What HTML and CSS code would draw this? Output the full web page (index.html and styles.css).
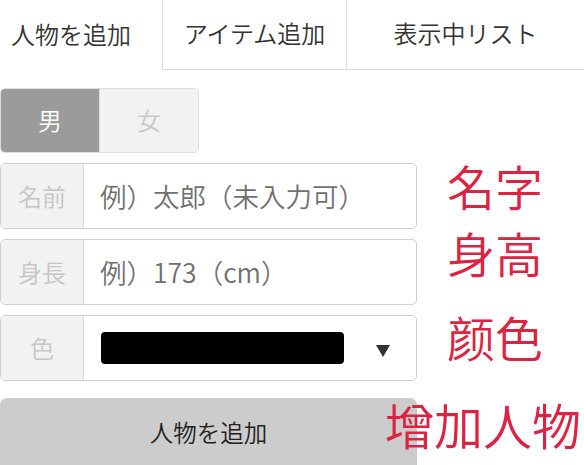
FILE: index.html
```html
<!DOCTYPE html>
<html lang="ja">
<head>
<meta charset="utf-8">
<link rel="stylesheet" href="styles.css">
</head>
<body>
<div class="page">
  <nav class="tabs">
    <div class="tab active">人物を追加</div>
    <div class="tab">アイテム追加</div>
    <div class="tab">表示中リスト</div>
  </nav>

  <div class="form">
    <div class="gender">
      <div class="g-btn on">男</div>
      <div class="g-btn off">女</div>
    </div>

    <div class="row">
      <div class="group">
        <div class="addon">名前</div>
        <div class="field">例）太郎（未入力可）</div>
      </div>
      <div class="note n1">名字</div>
    </div>

    <div class="row">
      <div class="group">
        <div class="addon">身長</div>
        <div class="field">例）173（cm）</div>
      </div>
      <div class="note n2">身高</div>
    </div>

    <div class="row">
      <div class="group">
        <div class="addon">色</div>
        <div class="field select">
          <span class="swatch"></span>
          <span class="caret"></span>
        </div>
      </div>
      <div class="note n3">颜色</div>
    </div>

    <div class="row last">
      <div class="submit">人物を追加</div>
      <div class="note overlap">增加人物</div>
    </div>
  </div>
</div>
</body>
</html>
```

FILE: styles.css
```css
html, body {
  margin: 0;
  padding: 0;
  background: #fff;
}
body {
  font-family: "Noto Sans CJK JP", "Noto Sans", sans-serif;
  font-weight: 350;
  color: #333;
  overflow: hidden;
}
.page {
  width: 584px;
  height: 465px;
  overflow: hidden;
}
.tabs {
  display: grid;
  grid-template-columns: 162px 184px 1fr;
  height: 70px;
}
.tab {
  display: flex;
  align-items: center;
  justify-content: center;
  font-size: 24px;
  color: #333;
  border-left: 1px solid #ddd;
  border-bottom: 1px solid #ddd;
  padding-bottom: 4px;
  box-sizing: border-box;
}
.tab.active {
  border: none;
  justify-content: flex-start;
  padding-left: 11px;
}
.form {
  display: flex;
  flex-direction: column;
  padding-top: 18px;
}
.gender {
  display: flex;
  width: 199px;
  height: 65px;
  border-radius: 5px;
  overflow: hidden;
  border: 1px solid #ddd;
  box-sizing: border-box;
  margin-bottom: 10px;
}
.g-btn {
  flex: 1;
  display: flex;
  align-items: center;
  justify-content: center;
  font-size: 24px;
  padding-bottom: 2px;
}
.g-btn.on {
  background: #9b9b9b;
  color: #fff;
}
.g-btn.off {
  background: #f2f2f2;
  color: #c8c8c8;
  border-left: 1px solid #ddd;
}
.row {
  display: grid;
  grid-template-columns: 417px 1fr;
  align-items: start;
  margin-bottom: 10px;
}
.group {
  display: flex;
  height: 66px;
  border: 1px solid #cfcfcf;
  border-radius: 5px;
  box-sizing: border-box;
  overflow: hidden;
}
.addon {
  width: 82px;
  flex: none;
  background: #f2f2f2;
  border-right: 1px solid #d6d6d6;
  color: #c6c6c6;
  font-size: 24px;
  display: flex;
  align-items: center;
  justify-content: center;
  padding-bottom: 2px;
}
.field {
  flex: 1;
  display: flex;
  align-items: center;
  padding-left: 16px;
  font-size: 26.5px;
  color: #707070;
  padding-bottom: 2px;
}
.field.select {
  padding-left: 17px;
  padding-right: 26px;
  justify-content: space-between;
  padding-bottom: 0;
}
.swatch {
  width: 243px;
  height: 32px;
  background: #000;
  border-radius: 4px;
}
.caret {
  width: 0;
  height: 0;
  border-left: 7px solid transparent;
  border-right: 7px solid transparent;
  border-top: 12px solid #333;
  margin-top: 6px;
}
.note {
  font-family: "Noto Sans CJK SC", sans-serif;
  font-weight: 350;
  font-size: 48px;
  color: #dc2442;
  line-height: 1;
  padding-left: 30px;
}
.n1 { margin-top: -2px; }
.n2 { margin-top: -11px; }
.n3 { margin-top: -3px; }
.row.last {
  margin-top: 7px;
}
.submit {
  height: 80px;
  background: #cccccc;
  border-radius: 7px;
  display: flex;
  justify-content: center;
  padding-top: 17px;
  box-sizing: border-box;
  font-size: 23.5px;
  color: #222;
}
.note.overlap {
  margin-left: -32px;
  padding-left: 0;
  padding-top: 1px;
  font-size: 49px;
}
```
